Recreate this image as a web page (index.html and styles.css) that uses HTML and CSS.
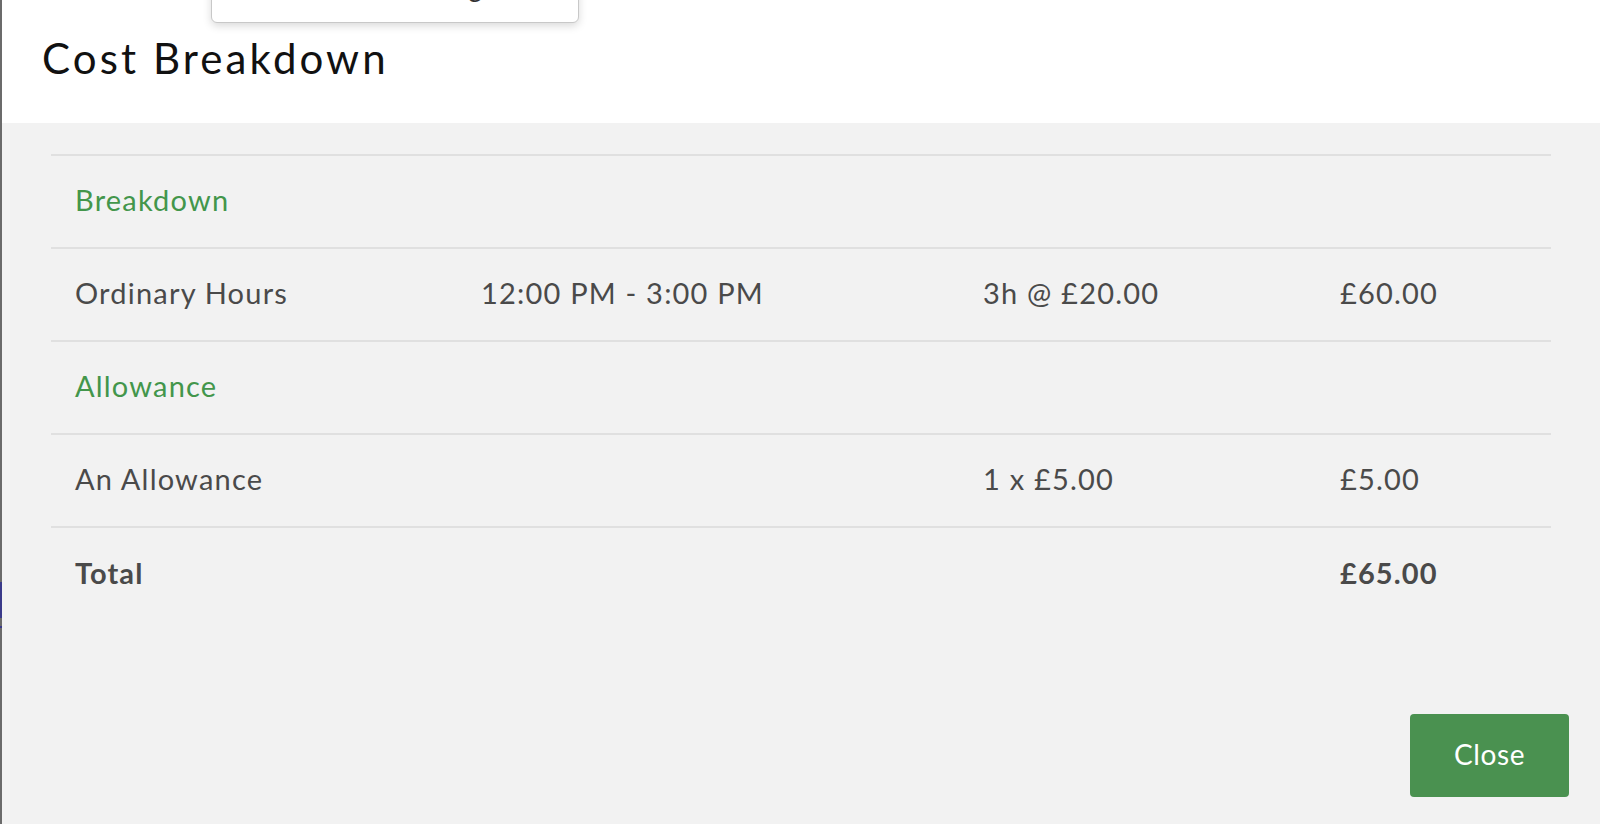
FILE: index.html
```html
<!DOCTYPE html>
<html>
<head>
<meta charset="utf-8">
<link rel="stylesheet" href="styles.css">
</head>
<body>
<div class="backdrop-edge">
  <span class="edge-mark m1"></span>
  <span class="edge-mark m2"></span>
</div>
<div class="modal">
  <header class="modal-header">
    <h1 class="modal-title">Cost Breakdown</h1>
  </header>
  <section class="modal-body">
    <div class="cost-table">
      <div class="row section-row">
        <div class="cell section">Breakdown</div>
      </div>
      <div class="row">
        <div class="cell">Ordinary Hours</div>
        <div class="cell">12:00 PM - 3:00 PM</div>
        <div class="cell">3h @ £20.00</div>
        <div class="cell">£60.00</div>
      </div>
      <div class="row section-row">
        <div class="cell section">Allowance</div>
      </div>
      <div class="row">
        <div class="cell">An Allowance</div>
        <div class="cell"></div>
        <div class="cell">1 x £5.00</div>
        <div class="cell">£5.00</div>
      </div>
      <div class="row total-row">
        <div class="cell">Total</div>
        <div class="cell"></div>
        <div class="cell"></div>
        <div class="cell">£65.00</div>
      </div>
    </div>
    <footer class="modal-footer">
      <button class="btn-close">Close</button>
    </footer>
  </section>
</div>
<div class="popover">
  <span class="popover-text">View Costing</span>
</div>
</body>
</html>
```
FILE: styles.css
```css
* { box-sizing: border-box; }
html, body {
  margin: 0;
  padding: 0;
  width: 1600px;
  height: 824px;
  overflow: hidden;
  background: #f2f2f2;
  font-family: "Lato", "Noto Sans", sans-serif;
}
body {
  display: flex;
  position: relative;
}
.backdrop-edge {
  width: 2px;
  height: 824px;
  background: #6b6b6b;
  position: relative;
  flex: none;
}
.edge-mark {
  position: absolute;
  left: 0;
  width: 2px;
  background: #3a3a8a;
}
.edge-mark.m1 { top: 582px; height: 36px; }
.edge-mark.m2 { top: 626px; height: 2px; }
.modal {
  flex: 1;
  display: flex;
  flex-direction: column;
  height: 824px;
}
.modal-header {
  background: #ffffff;
  height: 123px;
  padding: 0 40px;
  display: flex;
  align-items: flex-start;
}
.modal-title {
  margin: 0;
  padding-top: 34px;
  font-weight: 400;
  font-size: 42px;
  line-height: 48px;
  color: #111111;
  letter-spacing: 3.1px;
}
.modal-body {
  flex: 1;
  background: #f2f2f2;
  padding: 31px 0 0 49px;
  display: flex;
  flex-direction: column;
}
.cost-table {
  width: 1500px;
  border-top: 2px solid #e0e0e0;
}
.row {
  display: grid;
  grid-template-columns: 406px 502px 357px 1fr;
  height: 93px;
  border-bottom: 2px solid #e0e0e0;
  align-items: center;
}
.row.total-row { border-bottom: none; }
.cell {
  padding: 0 24px 4px 24px;
  font-size: 29px;
  letter-spacing: 1.2px;
  color: #4a4a4a;
  white-space: nowrap;
}
.section { color: #43964b; }
.total-row .cell { font-weight: 700; letter-spacing: 1.1px; }
.modal-footer {
  display: flex;
  justify-content: flex-end;
  padding-right: 31px;
  margin-top: 93px;
}
.btn-close {
  width: 159px;
  height: 83px;
  border: none;
  border-radius: 4px;
  background: #4a9150;
  color: #ffffff;
  font-family: "Lato", "Noto Sans", sans-serif;
  font-size: 28px;
  letter-spacing: 0.6px;
  padding: 0 0 3px 0;
}
.popover {
  position: absolute;
  left: 211px;
  top: -60px;
  width: 368px;
  height: 83px;
  background: #ffffff;
  border: 1px solid #c8c8c8;
  border-radius: 6px;
  box-shadow: 0 3px 8px rgba(0, 0, 0, 0.15);
  display: flex;
  justify-content: flex-end;
  align-items: flex-end;
  padding: 0 96px 20px 0;
}
.popover-text {
  font-size: 26px;
  line-height: 30px;
  color: #333333;
}
```
